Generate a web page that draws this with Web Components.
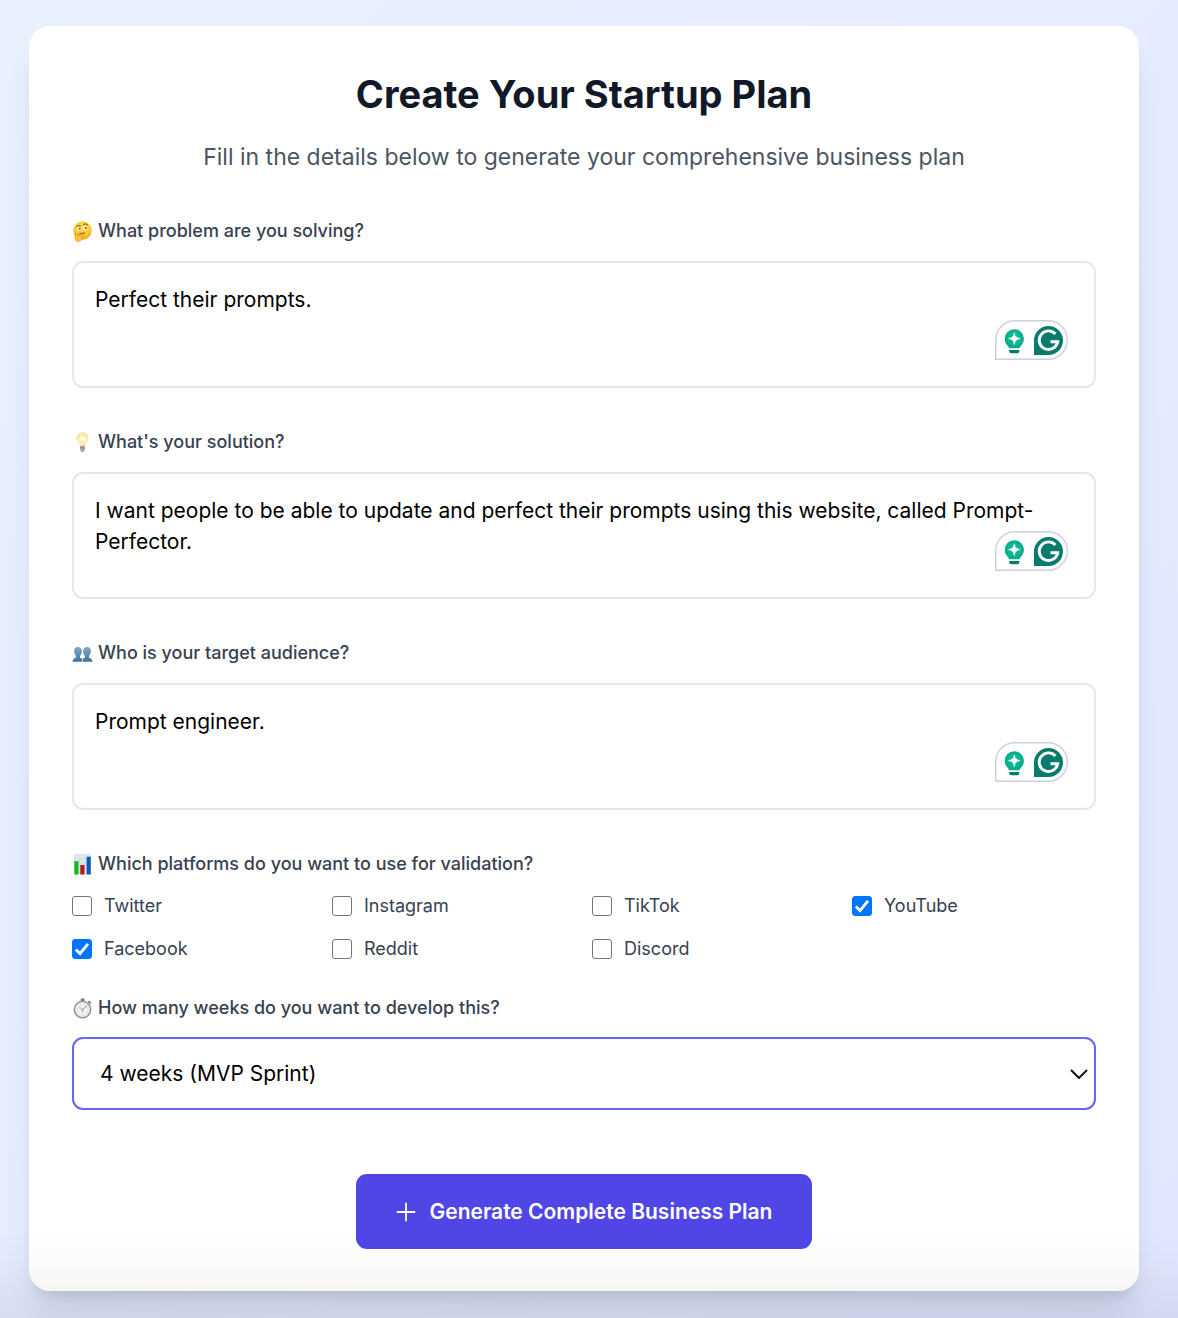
<!DOCTYPE html>
<html lang="en">
<head>
<meta charset="utf-8">
<meta name="viewport" content="width=device-width, initial-scale=1">
<title>Create Your Startup Plan</title>
<style>
  html { min-height: 100%; }
  body {
    margin: 0;
    min-height: 100vh;
    box-sizing: border-box;
    padding: 26px 39px 27px 29px;
    background: linear-gradient(to bottom right, #e9f1ff, #e1e7ff);
    font-family: Inter, "Noto Sans", sans-serif;
    color: #374151;
  }
</style>
</head>
<body>
<plan-card heading="Create Your Startup Plan" subheading="Fill in the details below to generate your comprehensive business plan">
  <text-field label="What problem are you solving?" value="Perfect their prompts."><emoji-icon slot="icon" name="thinking"></emoji-icon></text-field>
  <text-field label="What's your solution?" value="I want people to be able to update and perfect their prompts using this website, called Prompt-Perfector."><emoji-icon slot="icon" name="bulb"></emoji-icon></text-field>
  <text-field label="Who is your target audience?" value="Prompt engineer."><emoji-icon slot="icon" name="people"></emoji-icon></text-field>
  <check-group label="Which platforms do you want to use for validation?">
    <emoji-icon slot="icon" name="chart"></emoji-icon>
    <check-option label="Twitter"></check-option>
    <check-option label="Instagram"></check-option>
    <check-option label="TikTok"></check-option>
    <check-option label="YouTube" checked></check-option>
    <check-option label="Facebook" checked></check-option>
    <check-option label="Reddit"></check-option>
    <check-option label="Discord"></check-option>
  </check-group>
  <select-field label="How many weeks do you want to develop this?" value="4 weeks (MVP Sprint)"><emoji-icon slot="icon" name="stopwatch"></emoji-icon></select-field>
  <submit-button slot="action">Generate Complete Business Plan</submit-button>
</plan-card>
<bottom-fade></bottom-fade>

<script>
const labelCss = `
  .label { display: flex; align-items: center; gap: 5px; font-size: 18px; line-height: 26px; font-weight: 500; color: #374151; }
`;

class PlanCard extends HTMLElement {
  constructor() {
    super();
    this.attachShadow({ mode: 'open' }).innerHTML = `
      <style>
        :host { display: block; }
        .card { background: #fff; border-radius: 21px; padding: 43px 43px 42px;
          box-shadow: 0 27px 33px -7px rgba(0,0,0,.1), 0 11px 13px -8px rgba(0,0,0,.1); }
        header { text-align: center; margin-bottom: 43px; }
        h1 { margin: 0 0 20px; font-size: 38px; line-height: 50px; font-weight: 700; color: #111827; }
        p { margin: 0; font-size: 23px; line-height: 36px; color: #4b5563; }
        form { display: flex; flex-direction: column; }
        .action { display: flex; justify-content: center; margin-top: 64px; }
      </style>
      <main class="card">
        <header><h1></h1><p></p></header>
        <form onsubmit="return false"><slot></slot><div class="action"><slot name="action"></slot></div></form>
      </main>`;
  }
  connectedCallback() {
    this.shadowRoot.querySelector('h1').textContent = this.getAttribute('heading');
    this.shadowRoot.querySelector('p').textContent = this.getAttribute('subheading');
  }
}

class TextField extends HTMLElement {
  constructor() {
    super();
    this.attachShadow({ mode: 'open' }).innerHTML = `
      <style>${labelCss}
        :host { display: block; margin-bottom: 41px; }
        .box { position: relative; display: flex; margin-top: 17px; }
        textarea { flex: 1; min-width: 0; height: 127px; box-sizing: border-box; resize: none; margin: 0; padding: 21px;
          border: 2px solid #e5e7eb; border-radius: 11px; background: #fff; color: #000; outline: none;
          font-family: inherit; font-size: 21px; line-height: 31px; overflow: hidden; }
        textarea:focus { border-color: #6366f1; }
        writing-badge { position: absolute; right: 28px; bottom: 28px; }
      </style>
      <label class="label" for="field"><slot name="icon"></slot><span></span></label>
      <div class="box"><textarea id="field" spellcheck="false"></textarea><writing-badge></writing-badge></div>`;
  }
  connectedCallback() {
    this.shadowRoot.querySelector('span').textContent = this.getAttribute('label');
    this.shadowRoot.querySelector('textarea').value = this.getAttribute('value');
  }
}

class WritingBadge extends HTMLElement {
  constructor() {
    super();
    this.attachShadow({ mode: 'open' }).innerHTML = `
      <style>
        :host { display: block; }
        svg { display: block; }
      </style>
      <svg width="73" height="40" viewBox="0 0 73 40" aria-hidden="true">
        <defs><radialGradient id="g"><stop offset="0" stop-color="#08b892"/><stop offset=".6" stop-color="#08b892"/><stop offset="1" stop-color="#0aa888"/></radialGradient></defs>
        <path d="M.7 39.3V20A19.3 19.3 0 0 1 20 .7H53A19.3 19.3 0 0 1 53 39.3Z" fill="#fff" stroke="#cccfdf" stroke-width="1.4"/>
        <path d="M19.3 9.2a9.6 9.6 0 0 0-9.6 9.6c0 3.6 1.7 5.6 3.2 7.2.7.8 1 1.500 1.200 2.300h10.400c.2-.8.5-1.500 1.200-2.300 1.500-1.600 3.200-3.600 3.200-7.200a9.600 9.600 0 0 0-9.600-9.600Z" fill="url(#g)"/>
        <path d="M19.300 12.800c.8 3.900 1.900 5 5.800 5.800-3.900.8-5 1.900-5.800 5.800-.8-3.900-1.900-5-5.800-5.800 3.900-.8 5-1.900 5.800-5.800Z" fill="#fff" stroke="#fff" stroke-width=".6"/>
        <path d="M14.200 29.900h10.200v1a2.300 2.300 0 0 1-2.300 2.300h-5.600a2.300 2.300 0 0 1-2.300-2.300Z" fill="#087a68"/>
        <path d="M53.500 6A14.500 14.500 0 1 1 53.500 35H39V20.500A14.500 14.500 0 0 1 53.500 6Z" fill="#087c6c"/>
        <path d="M60.400 13.900A9.300 9.300 0 1 0 62.700 21.800H55.500" fill="none" stroke="#fff" stroke-width="2.900"/>
      </svg>`;
  }
}

class CheckGroup extends HTMLElement {
  constructor() {
    super();
    this.attachShadow({ mode: 'open' }).innerHTML = `
      <style>${labelCss}
        :host { display: block; margin-bottom: 33px; }
        fieldset { border: 0; margin: 0; padding: 0; min-width: 0; }
        legend { padding: 0; }
        .grid { display: grid; grid-template-columns: repeat(4, minmax(0, 1fr)); gap: 16px; margin-top: 15px; }
      </style>
      <fieldset><legend class="label"><slot name="icon"></slot><span></span></legend>
      <div class="grid"><slot></slot></div></fieldset>`;
  }
  connectedCallback() {
    this.shadowRoot.querySelector('span').textContent = this.getAttribute('label');
  }
}

class CheckOption extends HTMLElement {
  constructor() {
    super();
    this.attachShadow({ mode: 'open' }).innerHTML = `
      <style>
        :host { display: block; }
        label { display: flex; align-items: center; gap: 12px; font-size: 18px; line-height: 27px; color: #374151; }
        .tick { display: grid; }
        .tick > * { grid-area: 1 / 1; }
        input { appearance: none; width: 20px; height: 20px; margin: 0; box-sizing: border-box; border: 1px solid #767676; border-radius: 3px; background: #fff; }
        input:checked { border-color: #0075ff; background: #0075ff; }
        svg { width: 20px; height: 20px; visibility: hidden; pointer-events: none; }
        input:checked + svg { visibility: visible; }
      </style>
      <label for="box"><span class="tick"><input id="box" type="checkbox"><svg viewBox="0 0 20 20" aria-hidden="true"><path d="M3.800 10.600L8 14.600L16 4.800" fill="none" stroke="#fff" stroke-width="2.800"/></svg></span><span class="text"></span></label>`;
  }
  connectedCallback() {
    this.shadowRoot.querySelector('.text').textContent = this.getAttribute('label');
    this.shadowRoot.querySelector('input').checked = this.hasAttribute('checked');
  }
}

class SelectField extends HTMLElement {
  constructor() {
    super();
    this.attachShadow({ mode: 'open' }).innerHTML = `
      <style>${labelCss}
        :host { display: block; }
        .box { display: grid; align-items: center; margin-top: 16px; }
        .box > * { grid-area: 1 / 1; }
        select { appearance: none; width: 100%; height: 73px; box-sizing: border-box; margin: 0; padding: 0 26px;
          border: 2px solid #6366f1; border-radius: 11px; background: #fff; color: #000; outline: none;
          font-family: inherit; font-size: 21px; line-height: 31px; }
        svg { justify-self: end; margin-right: 8px; pointer-events: none; }
      </style>
      <label class="label" for="field"><slot name="icon"></slot><span></span></label>
      <div class="box"><select id="field"><option></option></select>
      <svg width="18" height="10" viewBox="0 0 18 10" aria-hidden="true"><path d="M1 1L9 9L17 1" fill="none" stroke="#111" stroke-width="2"/></svg></div>`;
  }
  connectedCallback() {
    this.shadowRoot.querySelector('span').textContent = this.getAttribute('label');
    this.shadowRoot.querySelector('option').textContent = this.getAttribute('value');
  }
}

class SubmitButton extends HTMLElement {
  constructor() {
    super();
    this.attachShadow({ mode: 'open' }).innerHTML = `
      <style>
        :host { display: block; }
        button { display: flex; align-items: center; gap: 14px; padding: 22px 40px; border: 0; border-radius: 11px;
          background: #4f46e5; color: #fff; font-family: inherit; font-size: 21px; line-height: 31px; font-weight: 600; }
      </style>
      <button type="submit"><svg width="20" height="20" viewBox="0 0 20 20" aria-hidden="true"><path d="M10 1.500V18.500M1.500 10H18.500" stroke="#fff" stroke-width="1.800" stroke-linecap="round"/></svg><span><slot></slot></span></button>`;
  }
}

const emoji = {
  thinking: `<defs><radialGradient id="f" cx=".5" cy=".35" r=".65"><stop offset="0" stop-color="#ffe554"/><stop offset=".7" stop-color="#fcc42f"/><stop offset="1" stop-color="#ee9b1e"/></radialGradient></defs>
    <circle cx="10.500" cy="9.500" r="9.200" fill="url(#f)"/>
    <ellipse cx="7.300" cy="7.700" rx="1.700" ry="1.900" fill="#fff"/><ellipse cx="13.300" cy="7.200" rx="1.700" ry="1.900" fill="#fff"/>
    <circle cx="7.700" cy="7.400" r="1" fill="#633a12"/><circle cx="13.600" cy="6.900" r="1" fill="#633a12"/>
    <path d="M4.800 5.200q2-1.400 4-.4M11.400 3.300q2.300-1.300 4.300.5M7.500 12.900q2.800-1.600 5.200-.8" fill="none" stroke="#754315" stroke-width=".9" stroke-linecap="round"/>
    <path d="M4 13.200c.7-.8 1.500-.2 1.600.7l.2 1.400 4.700-1.600c1.500-.4 1.800 1 .6 1.500l-1.900.9c1.200.3 1.300 1.300.6 2-.8 2.200-3 2.700-4.700 2.200C2.500 19.500 2.700 15.500 4 13.200Z" fill="#ffc834" stroke="#d98116" stroke-width=".6"/>`,
  bulb: `<defs><radialGradient id="b" cy=".6"><stop offset="0" stop-color="#fffdf0"/><stop offset=".65" stop-color="#fff4c0"/><stop offset="1" stop-color="#f5e3a0"/></radialGradient></defs>
    <path d="M10.500.4C6.800.4 4.700 3 4.700 6c0 3.500 3 4.800 3.300 8h5c.3-3.200 3.300-4.500 3.300-8 0-3-2.100-5.600-5.800-5.600Z" fill="url(#b)" stroke="#f0dfa4" stroke-width=".5"/>
    <path d="M9.700 13.500L8.800 8.500l1.700 1 1.700-1-.9 5" fill="none" stroke="#f5d37a" stroke-width=".6"/>
    <path d="M8 13.700h5v4.100l-1.300 1.900H9.300L8 17.800Z" fill="#b8b7b4"/><path d="M8 15.500l5-.5M8 17.300l5-.5M9.300 19.300h2.400" stroke="#77767a" stroke-width=".7"/>`,
  people: `<defs><linearGradient id="p" x2="0" y2="1"><stop stop-color="#84a9c6"/><stop offset="1" stop-color="#3e719c"/></linearGradient></defs>
    <g fill="url(#p)"><path d="M5.800 4C3 4 1.900 6 2.100 8.500c.2 2.300 1.300 3.700 2 4.600v1.500C2.500 15.500.8 15.800.5 18.800h9.700V15.500c-1.200-.5-2-.6-2.200-1v-1.400c.8-1 1.800-2.500 1.900-4.600C10 6 8.700 4 5.800 4Z"/><path d="M15.200 4c2.800 0 3.900 2 3.700 4.500-.2 2.300-1.300 3.700-2 4.600v1.500c1.600.9 3.300 1.200 3.600 4.200h-9.700v-3.300c1.200-.5 2-.6 2.200-1v-1.400c-.8-1-1.800-2.500-1.900-4.600C11 6 12.300 4 15.200 4Z"/></g>`,
  chart: `<path d="M2 0h17v20.500H2Z" fill="#dce8ef"/><path d="M2 5h17M2 10h17M2 15h17M7.700 0v20M13.400 0v20" stroke="#c8d7e1" stroke-width=".5"/>
    <path d="M2.300 7.200h4.200v13.300H2.300Z" fill="#18b51c"/><path d="M8.300 11h4.200v9.500H8.300Z" fill="#b81822"/><path d="M14.600 2.700h4.200v17.800h-4.200Z" fill="#1258b6"/>`,
  stopwatch: `<path d="M8.800.6h3.600v3H8.800ZM17 2.600l2.300 2-1.500 1.500-2-2Z" fill="#77797a"/>
    <circle cx="10.500" cy="11.500" r="8.200" fill="#f2f1ec" stroke="#929596" stroke-width="1.600"/><circle cx="10.500" cy="11.500" r="5.800" fill="none" stroke="#a8a8a2" stroke-width=".8" stroke-dasharray=".7 2.300"/>
    <path d="M10.500 11.500L15.200 7.300M10.500 11.500V14" stroke="#8a7771" stroke-width=".8"/><path d="M10.500 12L7 8.500" stroke="#e98b6c" stroke-width=".8"/><circle cx="10.500" cy="11.500" r="1" fill="#d5a18e"/>`
};

class EmojiIcon extends HTMLElement {
  constructor() {
    super();
    this.attachShadow({ mode: 'open' });
  }
  connectedCallback() {
    this.shadowRoot.innerHTML = `
      <style>:host { display: block; } svg { display: block; }</style>
      <svg width="21" height="21" viewBox="0 0 21 21" aria-hidden="true">${emoji[this.getAttribute('name')]}</svg>`;
  }
}

class BottomFade extends HTMLElement {
  constructor() {
    super();
    this.attachShadow({ mode: 'open' }).innerHTML = `
      <style>:host { position: fixed; left: 0; right: 0; bottom: 0; height: 88px; pointer-events: none;
        background: linear-gradient(to bottom, rgba(0,0,0,0), rgba(0,0,0,.015) 40%, rgba(0,0,0,.06)); }</style>`;
  }
}

customElements.define('emoji-icon', EmojiIcon);
customElements.define('writing-badge', WritingBadge);
customElements.define('plan-card', PlanCard);
customElements.define('text-field', TextField);
customElements.define('check-group', CheckGroup);
customElements.define('check-option', CheckOption);
customElements.define('select-field', SelectField);
customElements.define('submit-button', SubmitButton);
customElements.define('bottom-fade', BottomFade);
</script>
</body>
</html>
